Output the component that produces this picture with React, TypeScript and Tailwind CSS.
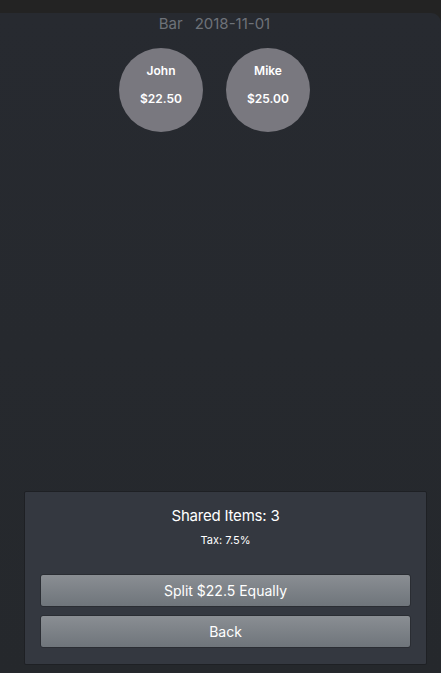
export default function App() {
  const people = [
    { name: "John", amount: "$22.50" },
    { name: "Mike", amount: "$25.00" },
  ];

  return (
    <div className="w-[441px] h-[673px] bg-[#232323] flex flex-col overflow-hidden font-['Inter','Liberation_Sans',sans-serif]">
      {/* window strip */}
      <div className="h-[13px] shrink-0" />

      <div className="flex-1 flex flex-col rounded-tr-[10px] bg-gradient-to-b from-[#272a30] to-[#25282c]">
        {/* Header */}
        <div className="flex justify-center gap-[12px] pt-[1px] pr-[12px] text-[15px] leading-[20px] text-[#6e7279]">
          <span>Bar</span>
          <span>2018-11-01</span>
        </div>

        {/* People */}
        <div className="flex justify-center gap-[23px] mt-[14px] pr-[12px]">
          {people.map((p) => (
            <div
              key={p.name}
              className="w-[84px] h-[84px] rounded-full bg-[#79787f] flex flex-col items-center pt-[15px] text-white font-semibold text-[12px] leading-[16px]"
            >
              <span>{p.name}</span>
              <span className="mt-[12px]">{p.amount}</span>
            </div>
          ))}
        </div>

        <div className="flex-1" />

        {/* Summary panel */}
        <div className="ml-[24px] mr-[14px] mb-[8px] border border-[#1e2024] rounded-[2px] bg-[#343840] px-[15px] pt-[14px] pb-[16px] flex flex-col items-center">
          <div className="text-[15px] leading-[20px] text-white tracking-[-0.2px]">Shared Items: 3</div>
          <div className="mt-[7px] text-[11px] leading-[14px] text-white">Tax: 7.5%</div>
          <div className="mt-[27px] w-full flex flex-col gap-[8px]">
            <button className="h-[33px] w-full rounded-[3px] border border-[#2a2d33] bg-gradient-to-b from-[#8a8e93] to-[#6f757b] text-white text-[14px]">
              Split $22.5 Equally
            </button>
            <button className="h-[33px] w-full rounded-[3px] border border-[#2a2d33] bg-gradient-to-b from-[#8a8e93] to-[#6f757b] text-white text-[14px]">
              Back
            </button>
          </div>
        </div>
      </div>
    </div>
  );
}
